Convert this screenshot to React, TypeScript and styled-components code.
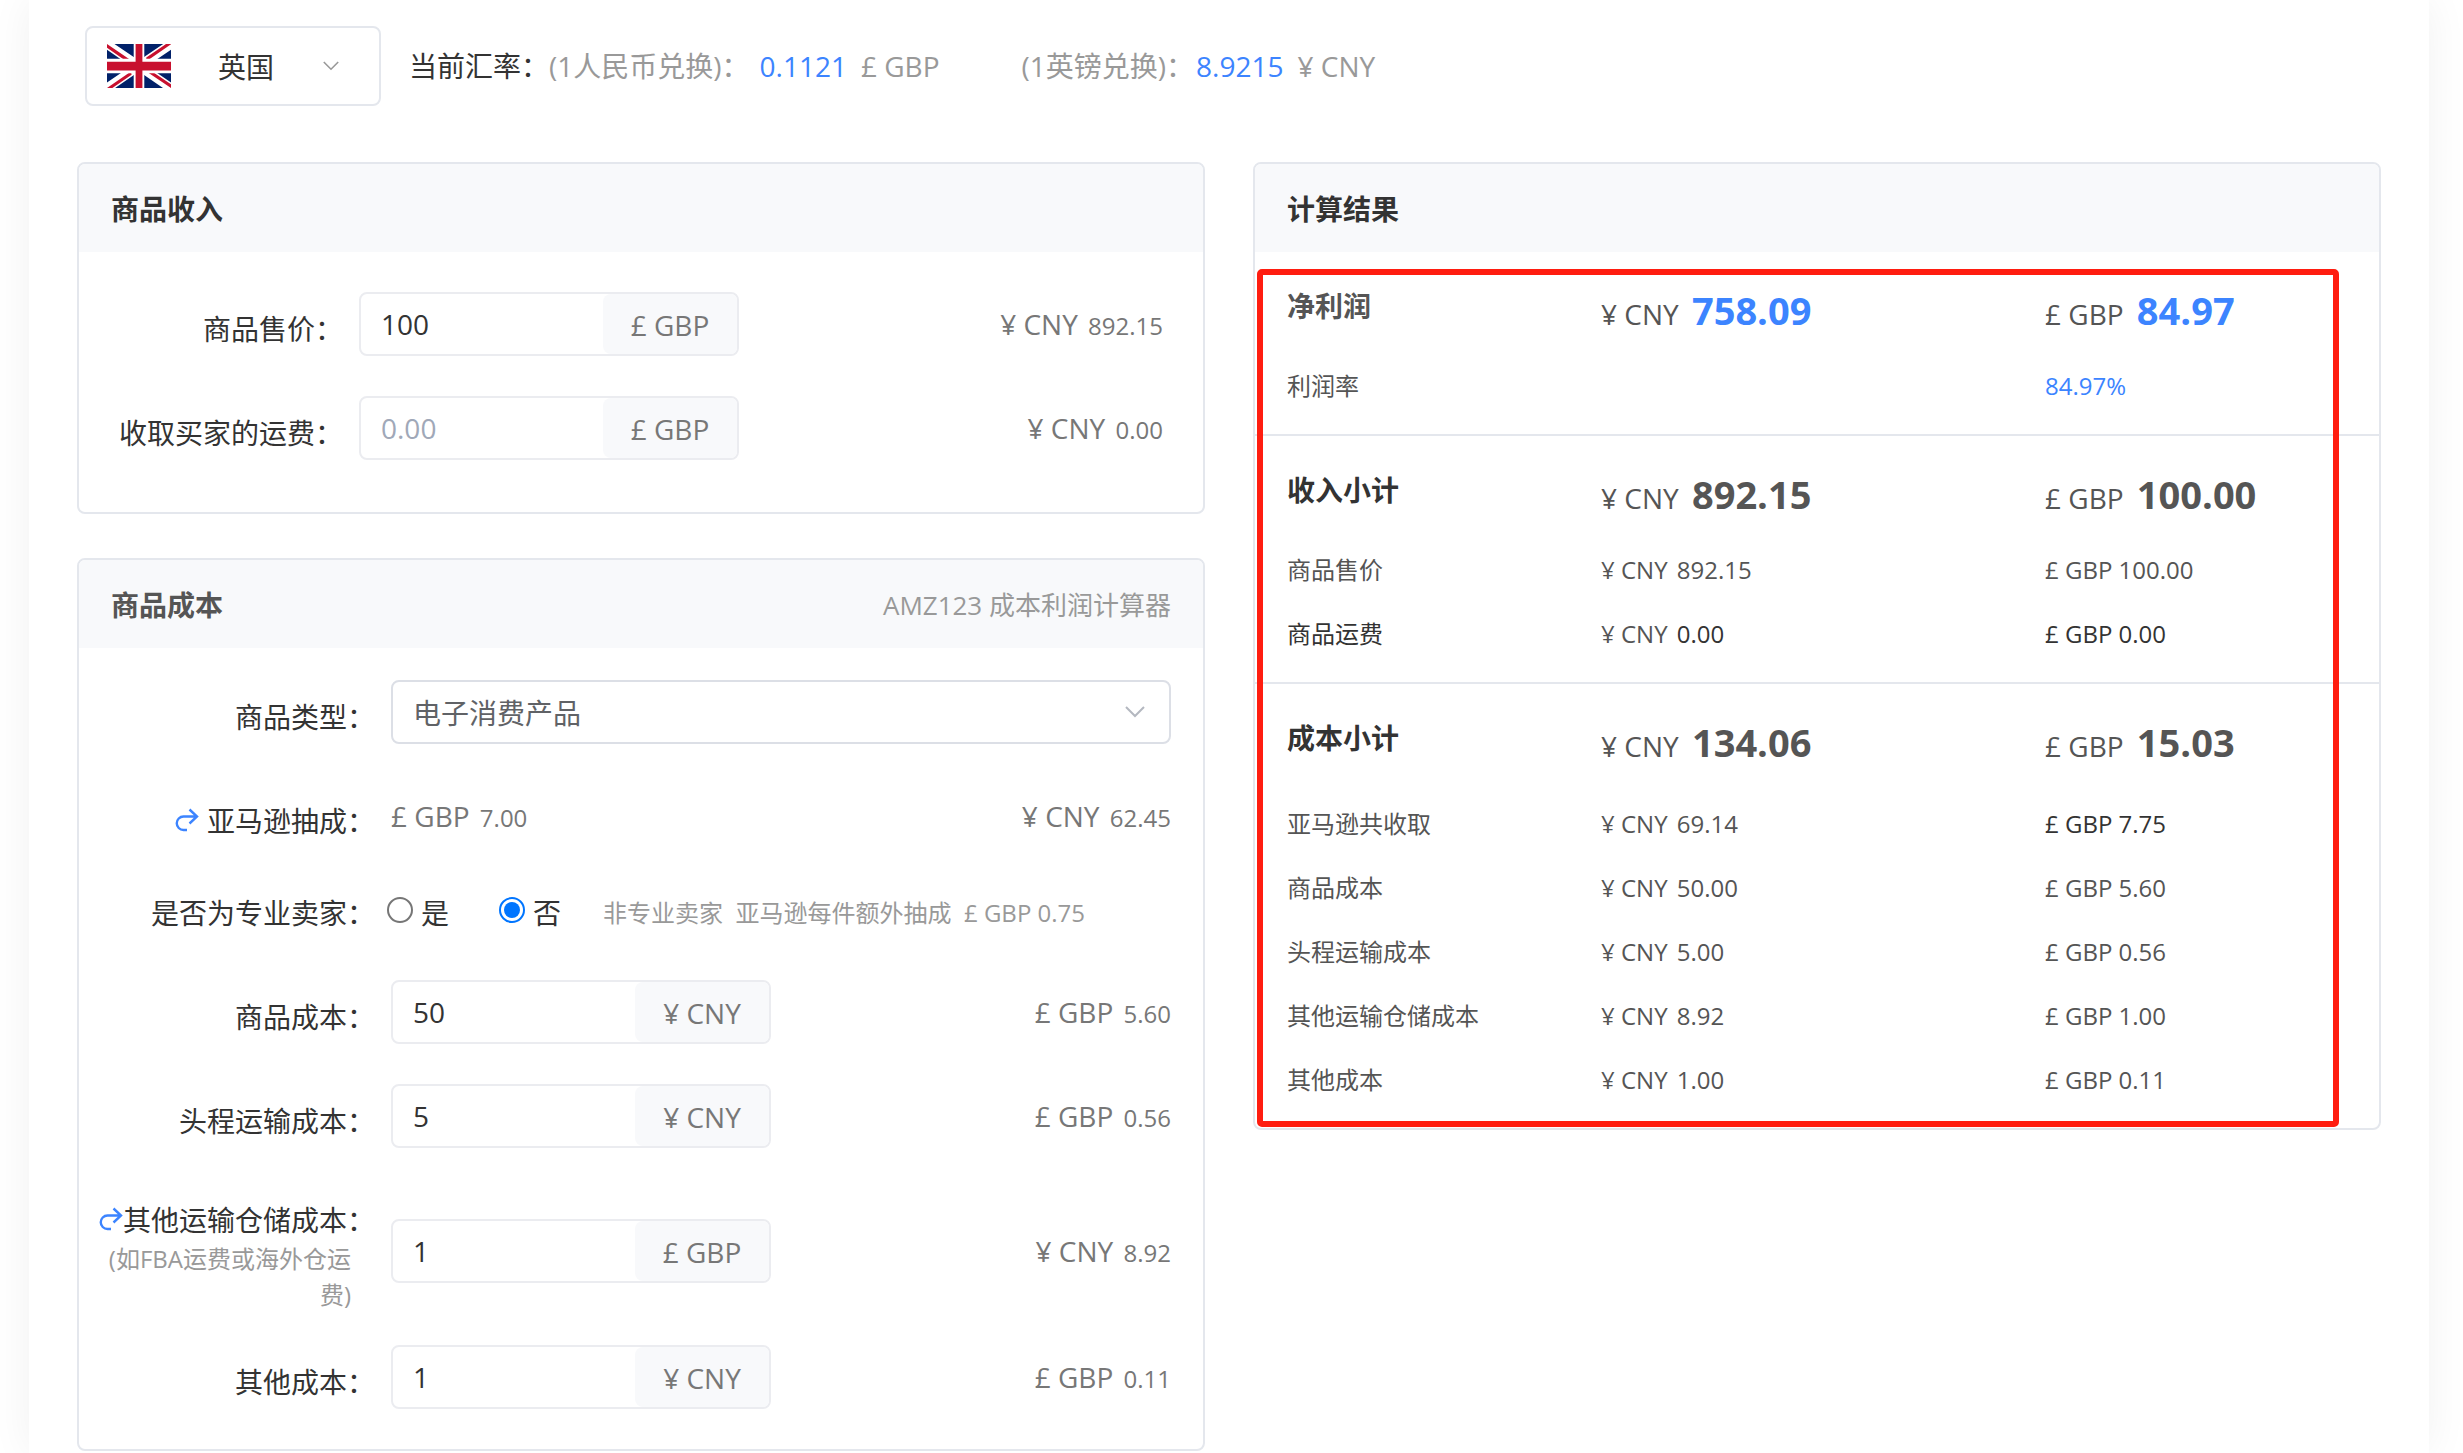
import React, { useState } from "react";
import styled, { createGlobalStyle } from "styled-components";

const GlobalStyle = createGlobalStyle`
  *, *::before, *::after { box-sizing: border-box; }
  body {
    margin: 0;
    background: #fff;
    color: #333;
    font-family: "Open Sans", "Noto Sans CJK SC", sans-serif;
    font-size: 28px;
  }
  input, select, button { font: inherit; color: inherit; }
`;

const BLUE = "#3c84ff";
const LINE = "#e4e7ed";
const HEAD = "#f8f9fb";

const Page = styled.div`
  padding: 0 34px 0 29px;
  overflow: hidden;
`;

const Panel = styled.main`
  min-height: 100vh;
  padding: 26px 48px 0;
  background: #fff;
  box-shadow: 0 0 40px rgba(0, 0, 0, 0.06);
`;

const Toolbar = styled.header`
  display: flex;
  align-items: center;
  padding-left: 8px;
  margin-bottom: 56px;
  line-height: 40px;
`;

const CountryBox = styled.label`
  display: flex;
  align-items: center;
  width: 296px;
  height: 80px;
  padding: 0 40px 0 20px;
  margin-right: 28px;
  border: 2px solid ${LINE};
  border-radius: 8px;
`;

const PlainSelect = styled.select<{ $indent: number }>`
  flex: 1;
  min-width: 0;
  height: 60px;
  padding: 2px 0 0 ${(p) => p.$indent}px;
  border: 0;
  outline: 0;
  background: transparent;
  appearance: none;
`;

const Rate = styled.span<{ $blue?: boolean; $after?: number }>`
  color: ${(p) => (p.$blue ? BLUE : "#999")};
  margin-right: ${(p) => p.$after ?? 0}px;
  white-space: nowrap;
`;

const Columns = styled.div`
  display: grid;
  grid-template-columns: minmax(0, 1fr) minmax(0, 1fr);
  align-items: start;
  gap: 48px;
`;

const Stack = styled.div`
  display: flex;
  flex-direction: column;
  gap: 44px;
`;

const Card = styled.section`
  position: relative;
  border: 2px solid ${LINE};
  border-radius: 8px;
`;

const CardHead = styled.div`
  display: flex;
  justify-content: space-between;
  align-items: center;
  height: 88px;
  padding: 2px 32px 0;
  border-radius: 6px 6px 0 0;
  background: ${HEAD};
`;

const CardTitle = styled.h2<{ $soft?: boolean }>`
  margin: 0;
  font-size: 28px;
  line-height: 40px;
  font-weight: 700;
  color: ${(p) => (p.$soft ? "#555" : "#333")};
`;

const CardNote = styled.span`
  font-size: 26px;
  line-height: 40px;
  color: #999;
`;

const Form = styled.form<{ $income?: boolean }>`
  padding: ${(p) => (p.$income ? "40px 40px 52px 0" : "32px 32px 40px 0")};
`;

const Row = styled.div<{ $labelWidth: number; $gap?: number; $center?: boolean }>`
  display: grid;
  grid-template-columns: ${(p) => p.$labelWidth}px minmax(0, 1fr) auto;
  column-gap: 16px;
  align-items: ${(p) => (p.$center ? "center" : "start")};
  min-height: 64px;
  margin-top: ${(p) => p.$gap ?? 40}px;
  &:first-child {
    margin-top: 0;
  }
`;

const LabelCell = styled.div<{ $tight?: boolean }>`
  padding-top: ${(p) => (p.$tight ? 11 : 16)}px;
  line-height: 42px;
  text-align: right;
  white-space: nowrap;
`;

const LabelHint = styled.div`
  padding: 0 24px 0 8px;
  font-size: 24px;
  line-height: 36px;
  color: #999;
  white-space: normal;
`;

const IconLink = styled.a<{ $spaced?: boolean }>`
  display: inline-block;
  margin-right: ${(p) => (p.$spaced ? 8 : 0)}px;
  color: ${BLUE};
  line-height: 0;
`;

const Field = styled.div`
  display: flex;
  width: 380px;
  height: 64px;
  border: 2px solid #ebecf0;
  border-radius: 8px;
`;

const FieldInput = styled.input`
  flex: 1;
  min-width: 0;
  padding: 0 20px;
  border: 0;
  outline: 0;
  border-radius: 8px;
  background: transparent;
  &::placeholder {
    color: #a0a8b8;
    opacity: 1;
  }
`;

const Suffix = styled.span`
  width: 134px;
  padding-top: 1px;
  border-radius: 8px 6px 6px 8px;
  background: ${HEAD};
  color: #777;
  line-height: 60px;
  text-align: center;
`;

const Amount = styled.span`
  line-height: 64px;
  color: #777;
  white-space: nowrap;
`;

const Small = styled.span`
  margin-left: 3px;
  font-size: 24px;
  line-height: 1;
`;

const CategoryBox = styled.div`
  display: flex;
  align-items: center;
  grid-column: 2 / -1;
  height: 64px;
  padding: 0 24px 0 20px;
  border: 2px solid #dcdfe6;
  border-radius: 8px;
  color: #606266;
`;

const Options = styled.div`
  display: flex;
  grid-column: 2 / -1;
  margin-left: -4px;
  padding-top: 16px;
  line-height: 42px;
`;

const RadioLabel = styled.label<{ $after: number }>`
  display: flex;
  align-items: center;
  gap: 8px;
  margin-right: ${(p) => p.$after}px;
`;

const Radio = styled.input`
  width: 26px;
  height: 26px;
  margin: 0 0 6px;
  padding: 3px;
  border: 2px solid #767676;
  border-radius: 50%;
  appearance: none;
  &:checked {
    border-color: #0075ff;
    background: #0075ff content-box;
  }
`;

const OptionNote = styled.span`
  font-size: 24px;
  color: #999;
  white-space: pre;
`;

const ResultSection = styled.div<{ $tall?: boolean }>`
  padding-bottom: 16px;
  border-top: 2px solid ${LINE};
  &:first-of-type {
    border-top: 0;
  }
  th,
  td {
    height: 64px;
    padding: 0;
    font-size: 24px;
    line-height: 40px;
    font-weight: 400;
    text-align: left;
    white-space: nowrap;
    color: #555;
  }
  thead th {
    height: ${(p) => (p.$tall ? 108 : 102)}px;
    vertical-align: top;
    font-size: 28px;
  }
`;

const ResultTable = styled.table`
  width: 100%;
  border-collapse: collapse;
  table-layout: fixed;
  th:first-child {
    width: 346px;
    padding-left: 32px;
  }
  th:nth-child(2) {
    width: 444px;
  }
`;

const GroupName = styled.div<{ $soft?: boolean }>`
  padding-top: 34px;
  font-weight: 700;
  color: ${(p) => (p.$soft ? "#555" : "#333")};
`;

const Total = styled.div`
  padding-top: 28px;
  line-height: 60px;
`;

const Big = styled.strong<{ $blue?: boolean }>`
  margin-left: 6px;
  font-size: 38px;
  font-weight: 700;
  color: ${(p) => (p.$blue ? BLUE : "#555")};
`;

const Tone = styled.span<{ $tone?: "dark" | "blue" }>`
  color: ${(p) => (p.$tone === "blue" ? BLUE : p.$tone === "dark" ? "#333" : "#555")};
`;

const Figure = styled(Tone)`
  margin-left: 3px;
`;

/* Frame drawn over the figures to call them out */
const Highlight = styled.div`
  position: absolute;
  top: 105px;
  right: 40px;
  bottom: 1px;
  left: 2px;
  border: 6px solid #ff1d10;
  border-radius: 5px;
  pointer-events: none;
`;

const UKFlag = () => (
  <svg width="64" height="44" viewBox="0 0 640 480" preserveAspectRatio="none" aria-hidden="true">
    <path fill="#012169" d="M0 0h640v480H0z" />
    <path fill="#fff" d="m75 0 244 181L562 0h78v62L400 241l240 178v61h-80L320 301 81 480H0v-60l239-178L0 64V0z" />
    <path fill="#c8102e" d="m424 281 216 159v40L369 281zm-184 20 6 35L54 480H0zM640 0v3L391 191l2-44L590 0zM0 0l239 176h-60L0 42z" />
    <path fill="#fff" d="M267 0v480h106V0zM0 160v160h640V160z" />
    <path fill="#c8102e" d="M0 193v96h640v-96zM286 0v480h68V0z" />
  </svg>
);

const Chevron = ({ width, color }: { width: number; color: string }) => (
  <svg width={width} height={width / 2 + 2} viewBox="0 0 20 12" fill="none" aria-hidden="true">
    <path d="M1 1l9 9 9-9" stroke={color} strokeWidth="2" />
  </svg>
);

const JumpIcon = () => (
  <svg width="24" height="24" viewBox="0 0 24 24" fill="none" stroke="currentColor" strokeWidth="2.4" aria-hidden="true">
    <path d="M14.5 1.5L22 8.5 14.5 15.5M22 8.5H8.5a6.5 6.5 0 0 0 0 13.5H12" />
  </svg>
);

const Money = ({ unit, value }: { unit: string; value: string }) => (
  <Amount>
    {unit} <Small>{value}</Small>
  </Amount>
);

const CNY = "¥ CNY";
const GBP = "£ GBP";

type FieldRowProps = {
  id: string;
  label: string;
  unit: string;
  initial: string;
  converted: [string, string];
  labelWidth: number;
  hint?: string;
  gap?: number;
};

const FieldRow = ({ id, label, unit, initial, converted, labelWidth, hint, gap }: FieldRowProps) => {
  const [value, setValue] = useState(initial);
  return (
    <Row $labelWidth={labelWidth} $gap={gap} $center={!!hint}>
      <LabelCell $tight={!!hint}>
        {hint && (
          <IconLink href="#" aria-label={label}>
            <JumpIcon />
          </IconLink>
        )}
        <label htmlFor={id}>{label}：</label>
        {hint && <LabelHint>{hint}</LabelHint>}
      </LabelCell>
      <Field>
        <FieldInput id={id} value={value} placeholder="0.00" onChange={(e) => setValue(e.target.value)} />
        <Suffix>{unit}</Suffix>
      </Field>
      <Money unit={converted[0]} value={converted[1]} />
    </Row>
  );
};

type Line = {
  name: string;
  cny?: string;
  gbp?: string;
  rate?: string;
  nameDark?: boolean;
  cnyDark?: boolean;
  gbpDark?: boolean;
};

type Group = { name: string; soft?: boolean; blue?: boolean; tall?: boolean; cny: string; gbp: string; lines: Line[] };

const groups: Group[] = [
  {
    name: "净利润",
    soft: true,
    blue: true,
    cny: "758.09",
    gbp: "84.97",
    lines: [{ name: "利润率", rate: "84.97%" }],
  },
  {
    name: "收入小计",
    cny: "892.15",
    gbp: "100.00",
    lines: [
      { name: "商品售价", cny: "892.15", gbp: "100.00" },
      { name: "商品运费", cny: "0.00", gbp: "0.00", nameDark: true, cnyDark: true, gbpDark: true },
    ],
  },
  {
    name: "成本小计",
    tall: true,
    cny: "134.06",
    gbp: "15.03",
    lines: [
      { name: "亚马逊共收取", cny: "69.14", gbp: "7.75", gbpDark: true },
      { name: "商品成本", cny: "50.00", gbp: "5.60" },
      { name: "头程运输成本", cny: "5.00", gbp: "0.56" },
      { name: "其他运输仓储成本", cny: "8.92", gbp: "1.00" },
      { name: "其他成本", cny: "1.00", gbp: "0.11" },
    ],
  },
];

const Results = () => (
  <Card>
    <CardHead as="header">
      <CardTitle>计算结果</CardTitle>
    </CardHead>
    {groups.map((g) => (
      <ResultSection key={g.name} $tall={g.tall}>
        <ResultTable>
          <thead>
            <tr>
              <th scope="col">
                <GroupName $soft={g.soft}>{g.name}</GroupName>
              </th>
              <th scope="col">
                <Total>
                  {CNY} <Big $blue={g.blue}>{g.cny}</Big>
                </Total>
              </th>
              <th scope="col">
                <Total>
                  {GBP} <Big $blue={g.blue}>{g.gbp}</Big>
                </Total>
              </th>
            </tr>
          </thead>
          <tbody>
            {g.lines.map((l) => (
              <tr key={l.name}>
                <th scope="row">
                  <Tone $tone={l.nameDark ? "dark" : undefined}>{l.name}</Tone>
                </th>
                <td>
                  {l.cny && (
                    <>
                      {CNY} <Figure $tone={l.cnyDark ? "dark" : undefined}>{l.cny}</Figure>
                    </>
                  )}
                </td>
                <td>
                  {l.rate ? (
                    <Tone $tone="blue">{l.rate}</Tone>
                  ) : (
                    <Tone $tone={l.gbpDark ? "dark" : undefined}>
                      {GBP} {l.gbp}
                    </Tone>
                  )}
                </td>
              </tr>
            ))}
          </tbody>
        </ResultTable>
      </ResultSection>
    ))}
    <Highlight />
  </Card>
);

export default function App() {
  const [pro, setPro] = useState(false);
  return (
    <>
      <GlobalStyle />
      <Page>
        <Panel>
          <Toolbar>
            <CountryBox>
              <UKFlag />
              <PlainSelect $indent={47} aria-label="英国" defaultValue="uk">
                <option value="uk">英国</option>
              </PlainSelect>
              <Chevron width={16} color="#999" />
            </CountryBox>
            <span>当前汇率：</span>
            <Rate $after={10}>(1人民币兑换)：</Rate>
            <Rate $blue $after={14}>0.1121</Rate>
            <Rate $after={82}>{GBP}</Rate>
            <Rate $after={2}>(1英镑兑换)：</Rate>
            <Rate $blue $after={14}>8.9215</Rate>
            <Rate>{CNY}</Rate>
          </Toolbar>
          <Columns>
            <Stack>
              <Card>
                <CardHead>
                  <CardTitle>商品收入</CardTitle>
                </CardHead>
                <Form $income>
                  <FieldRow id="price" label="商品售价" unit={GBP} initial="100" converted={[CNY, "892.15"]} labelWidth={264} />
                  <FieldRow id="shipping" label="收取买家的运费" unit={GBP} initial="" converted={[CNY, "0.00"]} labelWidth={264} />
                </Form>
              </Card>
              <Card>
                <CardHead>
                  <CardTitle $soft>商品成本</CardTitle>
                  <CardNote>AMZ123 成本利润计算器</CardNote>
                </CardHead>
                <Form>
                  <Row $labelWidth={296}>
                    <LabelCell>
                      <label htmlFor="category">商品类型：</label>
                    </LabelCell>
                    <CategoryBox>
                      <PlainSelect id="category" $indent={0} defaultValue="electronics">
                        <option value="electronics">电子消费产品</option>
                      </PlainSelect>
                      <Chevron width={20} color="#b4b8c0" />
                    </CategoryBox>
                  </Row>
                  <Row $labelWidth={296}>
                    <LabelCell>
                      <IconLink href="#" $spaced aria-label="亚马逊抽成">
                        <JumpIcon />
                      </IconLink>
                      亚马逊抽成：
                    </LabelCell>
                    <Money unit={GBP} value="7.00" />
                    <Money unit={CNY} value="62.45" />
                  </Row>
                  <Row $labelWidth={296} $gap={28}>
                    <LabelCell>是否为专业卖家：</LabelCell>
                    <Options role="radiogroup" aria-label="是否为专业卖家">
                      <RadioLabel $after={50}>
                        <Radio type="radio" name="pro" checked={pro} onChange={() => setPro(true)} />是
                      </RadioLabel>
                      <RadioLabel $after={42}>
                        <Radio type="radio" name="pro" checked={!pro} onChange={() => setPro(false)} />否
                      </RadioLabel>
                      <OptionNote>{"非专业卖家  亚马逊每件额外抽成  £ GBP 0.75"}</OptionNote>
                    </Options>
                  </Row>
                  <FieldRow id="cost" label="商品成本" unit={CNY} initial="50" converted={[GBP, "5.60"]} labelWidth={296} />
                  <FieldRow id="freight" label="头程运输成本" unit={CNY} initial="5" converted={[GBP, "0.56"]} labelWidth={296} />
                  <FieldRow
                    id="storage"
                    label="其他运输仓储成本"
                    unit={GBP}
                    initial="1"
                    converted={[CNY, "8.92"]}
                    labelWidth={296}
                    hint="(如FBA运费或海外仓运费)"
                  />
                  <FieldRow id="other" label="其他成本" unit={CNY} initial="1" converted={[GBP, "0.11"]} labelWidth={296} gap={32} />
                </Form>
              </Card>
            </Stack>
            <Results />
          </Columns>
        </Panel>
      </Page>
    </>
  );
}
